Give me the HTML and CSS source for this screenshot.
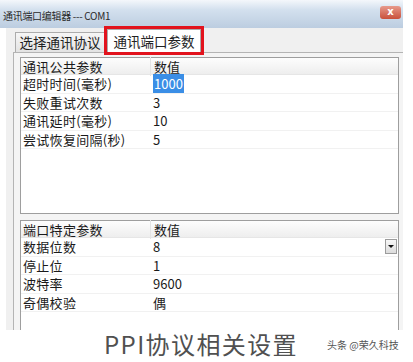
FILE: index.html
```html
<!DOCTYPE html>
<html lang="zh-CN">
<head>
    <meta charset="UTF-8">
    <meta name="viewport" content="width=device-width, initial-scale=1.0">
    <title>通讯端口编辑器</title>
    <link rel="stylesheet" href="styles.css">
</head>
<body>
    <div class="window">
        <div class="titlebar">
            <span class="title">通讯端口编辑器 --- COM1</span>
            <span class="close">x</span>
        </div>
        <div class="tabs">
            <div class="tab">选择通讯协议</div>
            <div class="tab active">通讯端口参数</div>
        </div>
        <div class="page">
            <div class="grid top">
                <div class="row head"><span class="name">通讯公共参数</span><span class="val">数值</span></div>
                <div class="row"><span class="name">超时时间(毫秒)</span><span class="val"><em class="sel">1000</em></span></div>
                <div class="row"><span class="name">失败重试次数</span><span class="val">3</span></div>
                <div class="row"><span class="name">通讯延时(毫秒)</span><span class="val">10</span></div>
                <div class="row"><span class="name">尝试恢复间隔(秒)</span><span class="val">5</span></div>
            </div>
            <div class="grid bottom">
                <div class="row head"><span class="name">端口特定参数</span><span class="val">数值</span></div>
                <div class="row"><span class="name">数据位数</span><span class="val">8</span><span class="drop"></span></div>
                <div class="row"><span class="name">停止位</span><span class="val">1</span></div>
                <div class="row"><span class="name">波特率</span><span class="val">9600</span></div>
                <div class="row"><span class="name">奇偶校验</span><span class="val">偶</span></div>
            </div>
        </div>
    </div>
    <div class="caption">
        <span class="label">PPI协议相关设置</span>
        <span class="mark">头条 @荣久科技</span>
    </div>
</body>
</html>
```

FILE: styles.css
```css
body {
    margin: 0;
    background: #fff;
    font-family: "Noto Sans CJK SC", "DejaVu Sans", sans-serif;
    color: #1a1a1a;
}

.window {
    width: 397px;
    height: 330px;
    margin-left: 6px;
    background: #f0f0f0;
    display: flex;
    flex-direction: column;
}

.titlebar {
    height: 28px;
    flex: none;
    display: flex;
    align-items: center;
    justify-content: space-between;
    margin-left: -6px;
    padding: 0 2px 0 3px;
    background: linear-gradient(#f4f7fb 0%, #d3e0ee 35%, #bccde0 100%);
}

.title {
    font-size: 10px;
    color: #2a2a2a;
    letter-spacing: -0.3px;
    margin-top: 2px;
}

.close {
    width: 21px;
    height: 13px;
    margin-top: -4px;
    border-radius: 3px;
    background: linear-gradient(#e79a8c, #c9503a);
    color: #fff;
    font: bold 10px/12px "DejaVu Sans", sans-serif;
    text-align: center;
}

.tabs {
    height: 24px;
    flex: none;
    display: flex;
    align-items: flex-end;
    padding-left: 9px;
    gap: 2px;
}

.tab {
    width: 88px;
    height: 19px;
    border: 1px solid #acacac;
    border-bottom: none;
    background: linear-gradient(#f6f6f6, #e3e3e3);
    font-size: 13.5px;
    line-height: 19px;
    text-align: center;
    color: #222;
}

.tab.active {
    width: 92px;
    height: 22px;
    line-height: 22px;
    background: #fff;
    box-shadow: 0 0 0 3px #e2131d;
    position: relative;
    z-index: 1;
}

.page {
    flex: 1;
    margin-left: 7px;
    border-left: 1px solid #b4b4b4;
    border-top: 1px solid #b4b4b4;
    padding: 4px 4px 0 6px;
    display: flex;
    flex-direction: column;
    gap: 6px;
    background: #f4f4f4;
}

.grid {
    background: #fff;
    border: 1px solid #9e9e9e;
    font-size: 13px;
}

.grid.top {
    height: 155px;
    flex: none;
}

.grid.bottom {
    flex: 1;
    border-bottom: none;
}

.row {
    height: 17.5px;
    display: flex;
    align-items: center;
    border-bottom: 1px solid #f1f1f1;
    position: relative;
}

.row.head {
    height: 16px;
    background: linear-gradient(#fdfdfd, #eeeeee);
    border-bottom: 1px solid #e6e6e6;
}

.name {
    width: 127px;
    padding-left: 2px;
    white-space: nowrap;
    letter-spacing: 0.3px;
}

.head .name {
    border-right: 1px solid #e4e4e4;
}

.val {
    padding-left: 3px;
}

.sel {
    font-style: normal;
    background: #3a8ee6;
    color: #fff;
    padding: 0 1px;
}

.drop {
    position: absolute;
    right: 1px;
    top: 1px;
    width: 10px;
    height: 13px;
    border: 1px solid #9c9c9c;
    background: linear-gradient(#f7f7f7, #dcdcdc);
}

.drop::after {
    content: "";
    position: absolute;
    left: 2px;
    top: 5px;
    border-left: 3px solid transparent;
    border-right: 3px solid transparent;
    border-top: 3px solid #111;
}

.caption {
    height: 28px;
    display: flex;
    align-items: center;
    position: relative;
}

.label {
    margin-left: 104px;
    font-size: 24px;
    line-height: 28px;
    color: #505050;
    letter-spacing: 1.4px;
}

.mark {
    position: absolute;
    left: 327px;
    top: 8px;
    font-size: 10px;
    line-height: 14px;
    color: #555;
}
```
